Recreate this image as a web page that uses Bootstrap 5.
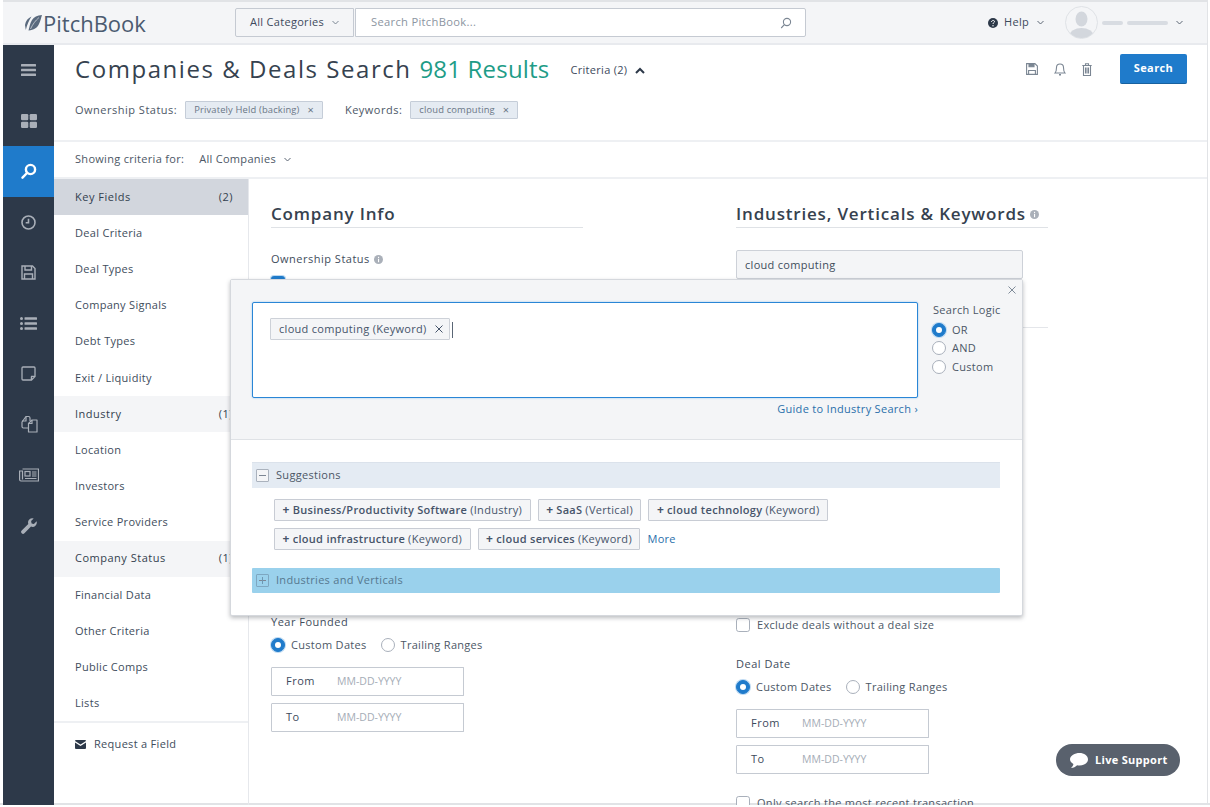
<!DOCTYPE html>
<html lang="en">
<head>
  <meta charset="UTF-8">
  <meta name="viewport" content="width=device-width, initial-scale=1.0">
  <title>PitchBook - Companies &amp; Deals Search</title>
  <link href="https://cdn.jsdelivr.net/npm/bootstrap@5.3.0/dist/css/bootstrap.min.css" rel="stylesheet">
  <style>
    html, body { height: 807px; overflow: hidden; }
    body { font-family: "Open Sans", "Liberation Sans", sans-serif; font-size: 11px; letter-spacing: .3px; color: #3d4a5c; background: #fff; }
    svg { display: block; flex: none; }
    .frame { position: relative; margin: 0 2px 2px 3px; height: 805px; overflow: hidden; border-top: 2px solid #e1e3e6; border-right: 1px solid #e1e3e6; border-bottom: 0; }
    .frame-wrap { height: 805px; border-bottom: 2px solid #e1e3e6; }

    .topbar { height: 43px; background: #f4f5f7; border-bottom: 2px solid #e8eaee; }
    .logo { width: 232px; padding-left: 22px; color: #4b5b70; font-size: 22px; letter-spacing: 0; line-height: 1; gap: 1px; }
    .cat-box { width: 119px; height: 29px; border: 1px solid #c5cad2; border-radius: 2px 0 0 2px; padding-left: 14px; color: #3d4a5c; background: #f4f5f7; }
    .search-box { width: 451px; height: 29px; border: 1px solid #c5cad2; border-radius: 0 2px 2px 0; background: #fff; padding: 0 13px 0 15px; color: #8c95a1; font-size: 11.2px; margin-left: 1px; }
    .help-link { margin-left: 182px; width: 59px; color: #3d4a5c; }
    .avatar { width: 33px; height: 33px; margin-left: 18px; border: 1px solid #dfe2e6; border-radius: 50%; overflow: hidden; background: #f4f5f7; }
    .name-bar { height: 4px; border-radius: 2px; background: #d8dce2; }

    .rail { width: 51px; background: #2d3949; padding-top: 0; }
    .rail-item { height: 50.6px; color: #a9afb8; }
    .rail-item.active { background: #1f7bcb; color: #fff; }

    .page-head { height: 97px; padding: 7px 20px 0 21px; border-bottom: 2px solid #eef0f3; }
    .page-title { font-size: 24px; font-weight: 400; letter-spacing: 1.55px; color: #36424f; margin: 0; line-height: 33px; }
    .page-title span { color: #1e9c87; letter-spacing: .2px; }
    .criteria-toggle { margin-left: 21px; padding-top: 3px; color: #3d4a5c; }
    .head-icon { color: #7b8693; }
    .btn-find { width: 67px; height: 30px; margin-left: 28px; padding: 0; font-size: 11px; font-weight: 700; color: #fff; background: #1f7bcb; border: 0; border-bottom: 1px solid #17619f; border-radius: 2px; letter-spacing: .4px; }
    .chip-row { margin-top: 16px; height: 18px; }
    .chip-label { font-weight: 500; letter-spacing: .5px; color: #4c5766; }
    .chip-on { height: 18px; padding: 0 8px; background: #e5ebf2; border: 1px solid #c5cdd8; border-radius: 1px; color: #6b7787; font-size: 9.4px; letter-spacing: .15px; margin-left: 8px; margin-right: 22px; }
    .chip-on b { font-weight: 400; margin-left: 8px; font-size: 11px; }

    .scope-bar { height: 37px; padding-left: 21px; border-bottom: 2px solid #eef0f3; color: #4c5766; }
    .scope-bar .scope-val { margin-left: 15px; }

    .crit-list { width: 195px; border-right: 1px solid #e6e8ec; }
    .crit-item { height: 36.17px; padding: 0 15px 0 21px; border: 0; border-radius: 0; font-size: 11px; color: #414d5c; background: transparent; }
    .crit-item.picked { background: #d2d6dd; color: #333f4e; font-weight: 500; letter-spacing: .5px; }
    .crit-item.filled { background: #f4f5f7; font-weight: 500; letter-spacing: .5px; color: #333f4e; }
    .request-link { margin-top: 0; border-top: 2px solid #eef0f3; padding: 13px 0 0 21px; color: #414d5c; }

    .form-area { padding-left: 22px; gap: 153px; }
    .form-col { width: 312px; }
    .col-title { font-size: 17px; font-weight: 600; letter-spacing: .82px; color: #36424f; margin: 0; padding-top: 24px; height: 49px; line-height: 22px; border-bottom: 1px solid #dfe2e6; }
    .title-info { margin-top: 7px; }
    .field-label { font-weight: 500; letter-spacing: .5px; color: #414d5c; line-height: 16px; }
    .pick { gap: 6px; color: #4c5766; }
    .pick .form-check-input, .pop-logic .form-check-input { width: 14px; height: 14px; margin: 0; border: 1px solid #a9b0bb; flex: none; }
    .pick .form-check-input:checked, .pop-logic .form-check-input:checked { background-color: #1f7bcb; border-color: #1f7bcb; box-shadow: 0 0 0 1px #bcd9f2; }
    .date-group { width: 193px; height: 29px; }
    .date-group .input-group-text { width: 60px; background: #fff; border: 1px solid #c5cad2; border-radius: 1px 0 0 1px; font-size: 11px; color: #3d4a5c; padding: 0 0 0 14px; font-weight: 500; letter-spacing: .5px; }
    .date-group .form-control { border: 1px solid #c5cad2; border-left: 0; border-radius: 0 1px 1px 0; font-size: 10.5px; padding: 0 7px; box-shadow: none; }
    .date-group .form-control::placeholder { color: #a5acb6; }
    .keyword-field { width: 287px; height: 29px; margin-top: 22px; padding: 0 8px; background: #f4f5f7; border: 1px solid #cdd1d8; border-radius: 2px; line-height: 27px; color: #414d5c; }
    .right-rule { height: 1px; background: #e4e6ea; margin-top: 48px; }

    .pop { position: absolute; left: 227px; top: 277px; width: 793px; height: 337px; background: #fff; border: 1px solid #d5d8dd; border-radius: 2px; box-shadow: 0 2px 4px rgba(60, 66, 75, .35); }
    .pop-top { height: 160px; background: #f4f5f7; border-bottom: 1px solid #dfe2e6; padding: 22px 0 0 21px; }
    .pop-close { position: absolute; right: 6px; top: 6px; color: #7f8b99; }
    .pop-input { width: 666px; height: 96px; background: #fff; border: 1px solid #2a86d6; box-shadow: 0 0 2px #8dc0ec; border-radius: 2px; padding: 15px 0 0 17px; }
    .token { height: 22px; padding: 0 6px 0 8px; background: #f4f5f7; border: 1px solid #cdd1d8; border-radius: 1px; color: #46546a; font-size: 11px; font-weight: 500; }
    .token i { font-style: normal; font-weight: 400; }
    .caret-bar { width: 1px; height: 16px; margin-left: 2px; background: #5a6675; }
    .guide-link { width: 666px; text-align: right; margin-top: 3px; color: #2a6fab; line-height: 15px; text-decoration: none; display: block; }
    .pop-logic { margin-left: 15px; padding-top: 0; color: #4c5766; }
    .pop-logic > div { height: 18.5px; gap: 6px; }
    .pop-logic .form-check-input { margin-left: -1px; }
    .pop-body { padding: 22px 22px 0 21px; }
    .sect-bar { height: 26px; padding: 0 0 1px 4px; gap: 7px; background: #e4ebf3; border-top: 1px solid #dbe2eb; color: #4c5766; }
    .sect-bar.open-bar { height: 25px; padding-bottom: 0; background: #9ad1ec; border: 0; border-radius: 1px; color: #56788f; margin-top: 18px; }
    .sign-box { width: 13px; height: 13px; border: 1px solid #aab2bd; border-radius: 1px; background: #f4f5f7; position: relative; }
    .open-bar .sign-box { background: transparent; border-color: #7ea7c1; }
    .sign-box::before { content: ""; position: absolute; left: 2px; right: 2px; top: 5px; height: 1px; background: #7c8694; }
    .sign-box.plus::after { content: ""; position: absolute; top: 2px; bottom: 2px; left: 5px; width: 1px; background: #6e98b3; }
    .sugg-wrap { margin: 11px 0 0 22px; gap: 7px; }
    .sugg { height: 22px; padding: 0 7.5px; background: #f4f5f7; border: 1px solid #c8ccd4; border-radius: 1px; font-weight: 600; color: #46546a; font-size: 11px; }
    .sugg i { font-style: normal; font-weight: 400; margin-left: 3px; }
    .sugg .plus-mark { font-weight: 700; margin-right: 3px; font-size: 12px; }
    .more-link { color: #2a6fab; text-decoration: none; }

    .live-chat { position: absolute; left: 1053px; top: 742px; width: 124px; height: 32px; gap: 7px; padding-left: 14px; border-radius: 16px; background: #59616d; color: #fff; font-weight: 700; font-size: 11px; letter-spacing: .3px; }
  </style>
</head>
<body>
  <div class="frame-wrap">
  <div class="frame d-flex flex-column">

    <header class="topbar d-flex align-items-center flex-shrink-0">
      <div class="logo d-flex align-items-center">
        <svg width="17" height="16" viewBox="0 0 17 16" fill="#5a6a7e"><path d="M17 0C12 .5 9 2 7 5 5 8 4.500 12 3.500 15.500 9 15 12 13 14 9c1.500-3 2-6 3-9z"/><path d="M6.500 1.500C3 3 .5 6 0 10l.8 5C2 10 4 5 6.500 1.500z"/><path d="M14 2.500C10.500 5.500 7.500 9.500 5.500 14" fill="none" stroke="#f4f5f7" stroke-width=".6"/></svg>
        <span>PitchBook</span>
      </div>
      <div class="cat-box d-flex align-items-center gap-2">All Categories
        <svg width="7" height="5" viewBox="0 0 7 5" fill="none" stroke="#7b8693"><path d="M.5 1l3 3 3-3"/></svg>
      </div>
      <div class="search-box d-flex align-items-center justify-content-between">Search PitchBook...
        <svg width="12" height="12" viewBox="0 0 12 12" fill="none" stroke="#7b8693" stroke-width="1.1"><circle cx="7" cy="5" r="3.6"/><path d="M4.400 7.600L1.200 11"/></svg>
      </div>
      <div class="help-link d-flex align-items-center">
        <svg width="10" height="10" viewBox="0 0 10 10"><circle cx="5" cy="5" r="5" fill="#2d3949"/><path d="M3.500 4c0-2 3-2 3-.4C6.500 4.700 5 4.600 5 6" fill="none" stroke="#fff" stroke-width="1"/><circle cx="5" cy="7.700" r=".7" fill="#fff"/></svg>
        <span style="margin-left: 6px">Help</span>
        <svg class="ms-2" width="7" height="5" viewBox="0 0 7 5" fill="none" stroke="#5c6775"><path d="M.5 1l3 3 3-3"/></svg>
      </div>
      <div class="avatar">
        <svg width="31" height="31" viewBox="0 0 31 31" fill="#d3d7dd"><ellipse cx="15.500" cy="12" rx="6" ry="7.500"/><ellipse cx="15.500" cy="29" rx="12" ry="8"/></svg>
      </div>
      <div class="name-bar ms-1" style="width: 21px"></div>
      <div class="name-bar ms-1" style="width: 41px"></div>
      <svg class="ms-2" width="7" height="5" viewBox="0 0 7 5" fill="none" stroke="#5c6775"><path d="M.5 1l3 3 3-3"/></svg>
    </header>

    <div class="d-flex flex-grow-1 overflow-hidden">
      <nav class="rail flex-shrink-0">
        <div class="rail-item d-flex align-items-center justify-content-center"><svg width="15" height="12" viewBox="0 0 15 12" fill="currentColor"><rect width="15" height="2.600" rx=".5"/><rect y="4.700" width="15" height="2.600" rx=".5"/><rect y="9.400" width="15" height="2.600" rx=".5"/></svg></div>
        <div class="rail-item d-flex align-items-center justify-content-center"><svg width="16" height="14" viewBox="0 0 16 14" fill="currentColor"><rect width="7.300" height="6.300" rx="1.200"/><rect x="8.700" width="7.300" height="6.300" rx="1.200"/><rect y="7.700" width="7.300" height="6.300" rx="1.200"/><rect x="8.700" y="7.700" width="7.300" height="6.300" rx="1.200"/></svg></div>
        <div class="rail-item active d-flex align-items-center justify-content-center"><svg width="16" height="16" viewBox="0 0 16 16" fill="none" stroke="currentColor" stroke-width="2.400"><circle cx="9.500" cy="6.500" r="4.600"/><path d="M6 10l-4.500 4.700" stroke-linecap="round"/></svg></div>
        <div class="rail-item d-flex align-items-center justify-content-center"><svg width="15" height="15" viewBox="0 0 15 15" fill="none" stroke="currentColor" stroke-width="1.600"><circle cx="7.500" cy="7.500" r="6.500"/><path d="M7.500 3.800v4H4.700"/></svg></div>
        <div class="rail-item d-flex align-items-center justify-content-center"><svg width="15" height="15" viewBox="0 0 15 15" fill="none" stroke="currentColor" stroke-width="1.400"><path d="M1 1h10.500L14 3.500V14H1z"/><path d="M4 1v4h6.500V1M3.500 14V9h8v5"/></svg></div>
        <div class="rail-item d-flex align-items-center justify-content-center"><svg width="17" height="13" viewBox="0 0 17 13" fill="currentColor"><circle cx="1.500" cy="1.500" r="1.500"/><circle cx="1.500" cy="6.500" r="1.500"/><circle cx="1.500" cy="11.500" r="1.500"/><rect x="4.500" y=".2" width="12.500" height="2.600" rx=".5"/><rect x="4.500" y="5.200" width="12.500" height="2.600" rx=".5"/><rect x="4.500" y="10.200" width="12.500" height="2.600" rx=".5"/></svg></div>
        <div class="rail-item d-flex align-items-center justify-content-center"><svg width="15" height="15" viewBox="0 0 15 15" fill="none" stroke="currentColor" stroke-width="1.300"><path d="M14 10.500V2a1 1 0 0 0-1-1H2a1 1 0 0 0-1 1v11a1 1 0 0 0 1 1h8.500zM14 10.500c-1.500-.3-3.500 0-3.500 0s-.3 2 0 3.500"/></svg></div>
        <div class="rail-item d-flex align-items-center justify-content-center"><svg width="18" height="18" viewBox="0 0 18 18" fill="none" stroke="currentColor" stroke-width="1.200" stroke-linejoin="round"><path d="M9.500 7.500L12 5h5v12H8.500V8.500z"/><path d="M12 5v3.500H8.500"/><path d="M8.500 13H3.500A1.500 1.500 0 0 1 2 11.500V7L6 1.500h2.500a1.500 1.500 0 0 1 1.500 1.500v3"/><path d="M6 1.500V6H2"/></svg></div>
        <div class="rail-item d-flex align-items-center justify-content-center"><svg width="20" height="14" viewBox="0 0 20 14" fill="none" stroke="currentColor" stroke-width="1.200"><path d="M3.500 1H19.500V13H2A1.500 1.500 0 0 1 .6 11.500V3h2.900v8.500"/><rect x="6" y="3.500" width="5" height="4.500"/><path d="M13 4h4.500M13 6h4.500M13 8h4.500M6 10.500h11.500"/></svg></div>
        <div class="rail-item d-flex align-items-center justify-content-center"><svg width="16" height="16" viewBox="0 0 16 16" fill="currentColor"><path d="M15.600 3.300l-2.700 2.600-2.300-.5-.5-2.300L12.700.4a4.300 4.300 0 0 0-5.400 5.500L.7 12.500a1.900 1.900 0 0 0 2.700 2.700l6.600-6.600a4.300 4.300 0 0 0 5.600-5.300z"/></svg></div>
      </nav>

      <main class="flex-grow-1 d-flex flex-column overflow-hidden">
        <section class="page-head flex-shrink-0">
          <div class="d-flex align-items-center">
            <h1 class="page-title">Companies &amp; Deals Search <span>981 Results</span></h1>
            <div class="criteria-toggle d-flex align-items-center gap-1">Criteria (2)
              <svg class="ms-1" width="10" height="7" viewBox="0 0 10 7" fill="none" stroke="#2d3949" stroke-width="2"><path d="M1 6l4-4 4 4"/></svg>
            </div>
            <div class="ms-auto d-flex align-items-center head-icon" style="gap: 16px; padding-top: 1px">
              <svg width="12" height="12" viewBox="0 0 12 12" fill="none" stroke="currentColor" stroke-width="1.100"><path d="M.6.600h8.300l2.500 2.500v8.300H.6z"/><path d="M3 .6v3.200h5V.6" fill="currentColor"/><path d="M2.600 11.400V7.500h6.800v3.900"/></svg>
              <svg width="12" height="14" viewBox="0 0 12 14" fill="none" stroke="currentColor" stroke-width="1.100"><path d="M1 11c1.200-1.300 1.500-2.500 1.500-5.500a3.500 3.500 0 0 1 7 0C9.500 8.500 9.800 9.700 11 11z"/><path d="M5 12.700h2" stroke-width="1.400"/></svg>
              <svg width="10" height="13" viewBox="0 0 10 13" fill="none" stroke="currentColor" stroke-width="1.100"><path d="M.3 2.500h9.400M3.500 2.500V.8h3v1.700M1.500 2.500v10h7v-10M3.500 4.500v6M5 4.500v6M6.500 4.500v6"/></svg>
            </div>
            <button type="button" class="btn btn-find">Search</button>
          </div>
          <div class="chip-row d-flex align-items-center">
            <span class="chip-label">Ownership Status:</span>
            <span class="chip-on d-inline-flex align-items-center">Privately Held (backing)<b>×</b></span>
            <span class="chip-label">Keywords:</span>
            <span class="chip-on d-inline-flex align-items-center">cloud computing<b>×</b></span>
          </div>
        </section>

        <section class="scope-bar d-flex align-items-center flex-shrink-0">
          Showing criteria for:
          <span class="scope-val d-inline-flex align-items-center gap-2">All Companies
            <svg width="7" height="5" viewBox="0 0 7 5" fill="none" stroke="#5c6775"><path d="M.5 1l3 3 3-3"/></svg>
          </span>
        </section>

        <div class="d-flex flex-grow-1 overflow-hidden">
          <aside class="crit-list flex-shrink-0">
            <div class="list-group list-group-flush">
              <div class="list-group-item crit-item picked d-flex align-items-center justify-content-between">Key Fields <span>(2)</span></div>
              <div class="list-group-item crit-item d-flex align-items-center">Deal Criteria</div>
              <div class="list-group-item crit-item d-flex align-items-center">Deal Types</div>
              <div class="list-group-item crit-item d-flex align-items-center">Company Signals</div>
              <div class="list-group-item crit-item d-flex align-items-center">Debt Types</div>
              <div class="list-group-item crit-item d-flex align-items-center">Exit / Liquidity</div>
              <div class="list-group-item crit-item filled d-flex align-items-center justify-content-between">Industry <span>(1)</span></div>
              <div class="list-group-item crit-item d-flex align-items-center">Location</div>
              <div class="list-group-item crit-item d-flex align-items-center">Investors</div>
              <div class="list-group-item crit-item d-flex align-items-center">Service Providers</div>
              <div class="list-group-item crit-item filled d-flex align-items-center justify-content-between">Company Status <span>(1)</span></div>
              <div class="list-group-item crit-item d-flex align-items-center">Financial Data</div>
              <div class="list-group-item crit-item d-flex align-items-center">Other Criteria</div>
              <div class="list-group-item crit-item d-flex align-items-center">Public Comps</div>
              <div class="list-group-item crit-item d-flex align-items-center">Lists</div>
            </div>
            <div class="request-link d-flex align-items-center gap-2">
              <svg width="11" height="9" viewBox="0 0 11 9" fill="#2d3949"><path d="M0 1a1 1 0 0 1 1-1h9a1 1 0 0 1 1 1L5.500 4.500z"/><path d="M0 2.500L5.500 6 11 2.500V8a1 1 0 0 1-1 1H1a1 1 0 0 1-1-1z"/></svg>
              Request a Field
            </div>
          </aside>

          <div class="form-area d-flex flex-grow-1">
            <div class="form-col">
              <h2 class="col-title">Company Info</h2>
              <div class="field-label d-flex align-items-center gap-1" style="margin-top: 23px">Ownership Status
                <svg width="9" height="9" viewBox="0 0 9 9"><circle cx="4.500" cy="4.500" r="4.500" fill="#aab0b9"/><rect x="4" y="3.800" width="1.100" height="3.400" fill="#fff"/><rect x="4" y="1.800" width="1.100" height="1.200" fill="#fff"/></svg>
              </div>
              <div class="pick d-flex align-items-center" style="margin-top: 8px"><input class="form-check-input" type="checkbox" checked> Privately Held (backing)</div>
              <div class="field-label" style="margin-top: 322px">Year Founded</div>
              <div class="pick d-flex align-items-center" style="margin-top: 7px"><input class="form-check-input" type="radio" name="yf" checked> <span class="me-2">Custom Dates</span> <input class="form-check-input" type="radio" name="yf"> Trailing Ranges</div>
              <div class="input-group date-group" style="margin-top: 14px"><span class="input-group-text">From</span><input class="form-control" placeholder="MM-DD-YYYY"></div>
              <div class="input-group date-group" style="margin-top: 7px"><span class="input-group-text">To</span><input class="form-control" placeholder="MM-DD-YYYY"></div>
            </div>
            <div class="form-col">
              <h2 class="col-title d-flex align-items-start gap-1">Industries, Verticals &amp; Keywords
                <svg class="title-info" width="9" height="9" viewBox="0 0 9 9"><circle cx="4.500" cy="4.500" r="4.500" fill="#aab0b9"/><rect x="4" y="3.800" width="1.100" height="3.400" fill="#fff"/><rect x="4" y="1.800" width="1.100" height="1.200" fill="#fff"/></svg>
              </h2>
              <div class="keyword-field">cloud computing</div>
              <div class="right-rule"></div>
              <div class="pick d-flex align-items-center" style="margin-top: 289px; gap: 7px"><input class="form-check-input" type="checkbox"> Exclude deals without a deal size</div>
              <div class="field-label" style="margin-top: 22px">Deal Date</div>
              <div class="pick d-flex align-items-center" style="margin-top: 7px"><input class="form-check-input" type="radio" name="dd" checked> <span class="me-2">Custom Dates</span> <input class="form-check-input" type="radio" name="dd"> Trailing Ranges</div>
              <div class="input-group date-group" style="margin-top: 14px"><span class="input-group-text">From</span><input class="form-control" placeholder="MM-DD-YYYY"></div>
              <div class="input-group date-group" style="margin-top: 7px"><span class="input-group-text">To</span><input class="form-control" placeholder="MM-DD-YYYY"></div>
              <div class="pick d-flex align-items-center" style="margin-top: 21px; gap: 7px"><input class="form-check-input" type="checkbox"> Only search the most recent transaction</div>
            </div>
          </div>
        </div>
      </main>
    </div>

    <div class="pop">
      <svg class="pop-close" width="8" height="8" viewBox="0 0 8 8" fill="none" stroke="currentColor"><path d="M.5.500l7 7M7.500.500l-7 7"/></svg>
      <div class="pop-top d-flex">
        <div>
          <div class="pop-input d-flex align-items-start">
            <span class="token d-inline-flex align-items-center">cloud computing&nbsp;<i>(Keyword)</i>
              <svg class="ms-2" width="8" height="8" viewBox="0 0 8 8" fill="none" stroke="#46546a"><path d="M.5.500l7 7M7.500.500l-7 7"/></svg>
            </span>
            <span class="caret-bar mt-1"></span>
          </div>
          <a class="guide-link" href="#">Guide to Industry Search ›</a>
        </div>
        <div class="pop-logic">
          <div>Search Logic</div>
          <div class="d-flex align-items-center"><input class="form-check-input" type="radio" name="lg" checked> OR</div>
          <div class="d-flex align-items-center"><input class="form-check-input" type="radio" name="lg"> AND</div>
          <div class="d-flex align-items-center"><input class="form-check-input" type="radio" name="lg"> Custom</div>
        </div>
      </div>
      <div class="pop-body">
        <div class="sect-bar d-flex align-items-center"><span class="sign-box"></span> Suggestions</div>
        <div class="sugg-wrap d-flex flex-column">
          <div class="d-flex" style="gap: 7px">
            <span class="sugg d-inline-flex align-items-center"><span class="plus-mark">+</span>Business/Productivity Software <i>(Industry)</i></span>
            <span class="sugg d-inline-flex align-items-center"><span class="plus-mark">+</span>SaaS <i>(Vertical)</i></span>
            <span class="sugg d-inline-flex align-items-center"><span class="plus-mark">+</span>cloud technology <i>(Keyword)</i></span>
          </div>
          <div class="d-flex align-items-center" style="gap: 7px">
            <span class="sugg d-inline-flex align-items-center"><span class="plus-mark">+</span>cloud infrastructure <i>(Keyword)</i></span>
            <span class="sugg d-inline-flex align-items-center"><span class="plus-mark">+</span>cloud services <i>(Keyword)</i></span>
            <a class="more-link" href="#">More</a>
          </div>
        </div>
        <div class="sect-bar open-bar d-flex align-items-center"><span class="sign-box plus"></span> Industries and Verticals</div>
      </div>
    </div>

    <div class="live-chat d-flex align-items-center">
      <svg width="18" height="15" viewBox="0 0 18 15" fill="#fff"><path d="M9.500 0C14 0 18 2.500 18 6.300s-4 6.200-8.500 6.200c-.9 0-1.700-.1-2.400-.3C5.600 13.600 3.500 15 1 15c1.500-1.200 2.300-2.500 2.400-4C1.500 10 0 8.300 0 6.300 0 2.500 5 0 9.500 0z"/></svg>
      Live Support
    </div>
  </div>
  </div>
</body>
</html>
